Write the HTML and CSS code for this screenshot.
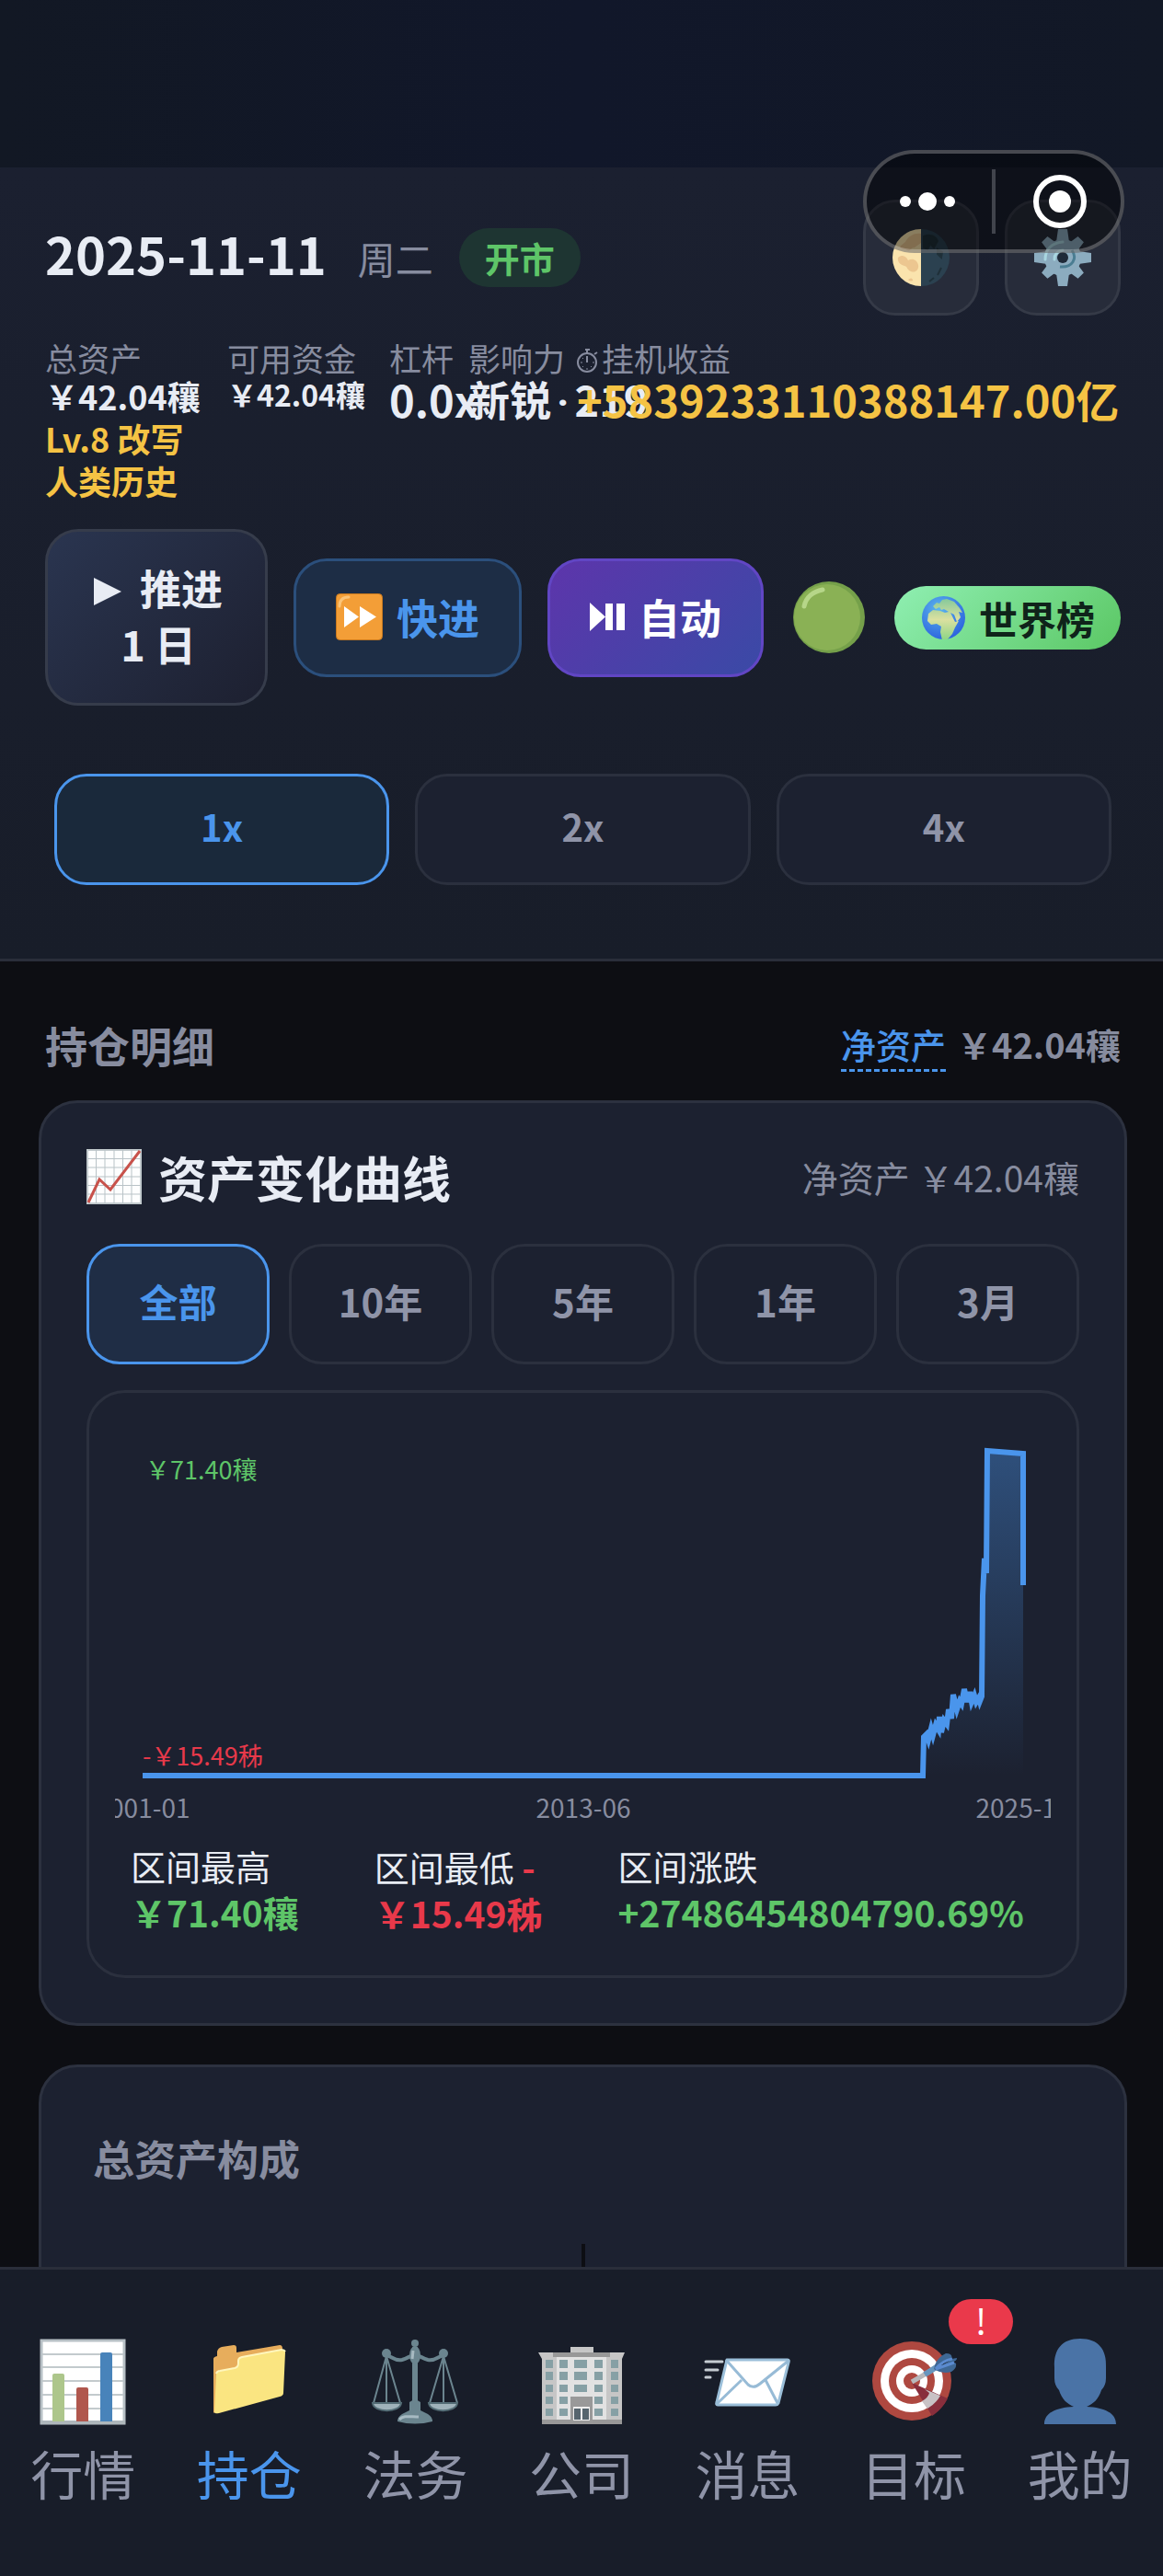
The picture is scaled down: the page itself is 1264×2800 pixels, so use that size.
FILE: index.html
```html
<!DOCTYPE html>
<html lang="zh-CN">
<head>
  <meta charset="UTF-8">
  <meta name="viewport" content="width=device-width, initial-scale=1.0">
  <title>持仓</title>
  <link rel="stylesheet" href="styles.css">
</head>
<body>
  <div class="app">
    <div class="status-bar"></div>

    <div class="capsule">
      <button class="capsule__btn" aria-label="更多">
        <svg width="60" height="24" viewBox="0 0 60 24" fill="#fff"><circle cx="6" cy="12" r="6"/><circle cx="30" cy="12" r="10"/><circle cx="54" cy="12" r="6"/></svg>
      </button>
      <span class="capsule__line"></span>
      <button class="capsule__btn" aria-label="关闭">
        <svg width="58" height="58" viewBox="0 0 58 58"><circle cx="29" cy="29" r="26" fill="none" stroke="#fff" stroke-width="6"/><circle cx="29" cy="29" r="12" fill="#fff"/></svg>
      </button>
    </div>

    <header class="header">
      <div class="date-row">
        <span class="date">2025-11-11</span>
        <span class="weekday">周二</span>
        <span class="market">开市</span>
        <div class="tools">
          <button class="tool" aria-label="主题">
            <svg width="62" height="62" viewBox="0 0 62 62">
              <circle cx="31" cy="31" r="31" fill="#2b4150"/>
              <path d="M31 0a31 31 0 0 0 0 62z" fill="#fae3ad"/>
              <path d="M31 5c-8-1-14 3-17 9l-6 5c2 4 5 2 8 4s4-3 8-3l7-5zM6 31c5-4 9-1 11 3 5-3 10 0 11 5s-3 9-8 7-3-5-7-6-8-4-7-9zM17 55c2-2 4-2 5 0s-3 2-5 0z" fill="#ecc690"/>
              <path d="M34 8c7-3 13 0 15 5l-4 7-4-4-3 6-4-2zM49 22l5 3-1 6-4-4zM53 42l-4 8M45 53l-5 4" fill="#1f3039" stroke="#1f3039" stroke-width="2"/>
            </svg>
          </button>
          <button class="tool" aria-label="设置">
            <svg width="62" height="62" viewBox="0 0 62 62">
              <g fill="#8cacbf">
                <circle cx="31" cy="31" r="20"/>
                <path d="M26 0h10l2 14H24zM26 62h10l2-14H24zM0 26v10l14 2V24zM62 26v10l-14 2V24z"/>
                <path d="M26 0h10l2 14H24zM26 62h10l2-14H24zM0 26v10l14 2V24zM62 26v10l-14 2V24z" transform="rotate(45 31 31) translate(3 3) scale(.9)"/>
              </g>
              <path d="M12 33c0-11 7-18 19-19M22 33c0-6 3-9 9-10" fill="none" stroke="#a9d6e0" stroke-width="3" stroke-linecap="round"/>
              <path d="M41 23c6 9 1 19-13 18" fill="none" stroke="#4a7d92" stroke-width="3"/>
              <circle cx="31" cy="31" r="6" fill="#1f2a38"/>
            </svg>
          </button>
        </div>
      </div>

      <div class="stats">
        <div class="stat">
          <div class="stat__label">总资产</div>
          <div class="stat__value stat__value--md">&#65509;42.04穰</div>
          <div class="level">Lv.8 改写<br>人类历史</div>
        </div>
        <div class="stat">
          <div class="stat__label">可用资金</div>
          <div class="stat__value stat__value--sm">&#65509;42.04穰</div>
        </div>
        <div class="stat">
          <div class="stat__label">杠杆</div>
          <div class="stat__value">0.0x</div>
        </div>
        <div class="stat">
          <div class="stat__label">影响力</div>
          <div class="stat__value stat__value--rank">新锐<span class="sep">·</span>219</div>
        </div>
        <div class="stat">
          <div class="stat__label">
            <svg class="stopwatch" width="24" height="28" viewBox="0 0 24 28" fill="none" stroke="#878c9f" stroke-width="2"><circle cx="11" cy="16" r="10"/><path d="M9 2h5M11 3v3M11 9v7M19 7l3-2"/><path d="M11 22v2M4 16h2M17 16h2M6 11l1 1M6 21l1-1M16 21l-1-1" stroke-width="1"/></svg>挂机收益
          </div>
          <div class="stat__value stat__value--gold">+5839233110388147.00亿</div>
        </div>
      </div>

      <div class="controls">
        <button class="btn btn--step"><svg width="30" height="30" viewBox="0 0 30 30"><path d="M0 0l30 15L0 30z" fill="#e8ecf4"/></svg><span class="btn__gap"></span>推进<br>1 日</button>
        <button class="btn btn--fast">
          <svg width="51" height="51" viewBox="0 0 51 51"><rect x=".5" y=".5" width="50" height="50" rx="4" fill="#f39e37" stroke="#c8791e"/><path d="M4 14C4 7 8 4 14 4" fill="none" stroke="#fbc477" stroke-width="3" stroke-linecap="round"/><path d="M9 14l16 11.500L9 37zM26 14l18 11.500L26 37z" fill="#fff"/></svg>
          快进
        </button>
        <button class="btn btn--auto">
          <svg width="38" height="31" viewBox="0 0 38 31" fill="#fff"><path d="M0 0l17 15.500L0 31zM17 1h8v29h-8zM29 1h9v29h-9z"/></svg>
          自动
        </button>
        <svg class="dot" width="78" height="78" viewBox="0 0 78 78"><circle cx="39" cy="39" r="39" fill="#75a04a"/><circle cx="37" cy="39" r="36" fill="#8ab155"/><path d="M12 27C14 17 22 11 32 9" fill="none" stroke="#b6d689" stroke-width="5" stroke-linecap="round"/></svg>
        <a class="rank" href="#rank">
          <svg width="47" height="47" viewBox="0 0 47 47"><defs><radialGradient id="sea" cx=".4" cy=".3" r=".75"><stop offset="0" stop-color="#5cb6ee"/><stop offset="1" stop-color="#2a60dd"/></radialGradient><linearGradient id="land" x1="0" y1="0" x2="0" y2="1"><stop offset="0" stop-color="#86c99b"/><stop offset=".5" stop-color="#dbe0a0"/><stop offset="1" stop-color="#8bd585"/></linearGradient></defs><circle cx="23.500" cy="23.500" r="23.500" fill="url(#sea)"/><path d="M12 11l4-4 3 1 3-4 5-1 8 3 6 7 3 5-4-1 2 6-4 5-3-8-4-2 5 10 4-1-4 7-3 7-6 7h-5l-2-9 1-6-5-3-6 1-4-4 1-8 5-4 8 1 5 2 4-1-5-3-3 1-2-3-4 2zM33 34l2-1-1 6-2 1z" fill="url(#land)"/></svg>
          世界榜
        </a>
      </div>

      <div class="speeds">
        <button class="speed speed--active">1x</button>
        <button class="speed">2x</button>
        <button class="speed">4x</button>
      </div>
    </header>

    <main class="main">
      <div class="section-head">
        <h2 class="section-title">持仓明细</h2>
        <div class="networth"><a class="networth__link" href="#networth">净资产</a><span class="networth__value">&#65509;42.04穰</span></div>
      </div>

      <section class="card">
        <div class="card-head">
          <svg width="60" height="60" viewBox="0 0 60 60"><rect x="1" y="1" width="58" height="58" fill="#fdfefe" stroke="#c3cbce" stroke-width="2"/><path d="M10.500 1v58M20 1v58M30 1v58M39.500 1v58M49 1v58M1 10.500h58M1 20h58M1 30h58M1 39.500h58M1 49h58" stroke="#b9c3c7" stroke-width="1"/><path d="M2 58l12-25 12 11L58 2" fill="none" stroke="#c8524b" stroke-width="3"/></svg>
          <h3 class="card-title">资产变化曲线</h3>
          <span class="card-note">净资产 &#65509;42.04穰</span>
        </div>

        <div class="ranges">
          <button class="range range--active">全部</button>
          <button class="range">10年</button>
          <button class="range">5年</button>
          <button class="range">1年</button>
          <button class="range">3月</button>
        </div>

        <div class="chart-box">
          <svg class="chart" viewBox="0 0 1017 455">
            <defs>
              <linearGradient id="area" x1="0" y1="0" x2="0" y2="1">
                <stop offset="0" stop-color="#4a95ec" stop-opacity=".4"/>
                <stop offset="1" stop-color="#4a95ec" stop-opacity="0"/>
              </linearGradient>
            </defs>
            <path d="M30 388H878L879 346 896 332 911 310 923 304 942 303 943 192 948 36 987 39V388z" fill="url(#area)"/>
            <polyline points="30,388 878,388 879,346 882,343 884,349 887,337 889,344 892,333 895,338 896,324 898,341 901,328 904,332 906,316 909,326 911,300 914,312 915,316 918,307 920,310 923,294 926,308 929,297 931,308 934,301 936,308 939,303 940,307 942,302 943,192 945,152 947,168 948,35 987,38 987,181" fill="none" stroke="#4a95ec" stroke-width="6"/>
            <text x="33" y="66" class="chart__max">&#65509;71.40穰</text>
            <text x="30" y="377" class="chart__min">-&#65509;15.49秭</text>
            <text x="30" y="434" class="chart__date">2001-01</text>
            <text x="509" y="434" class="chart__date">2013-06</text>
            <text x="987" y="434" class="chart__date">2025-11</text>
          </svg>
          <div class="summary">
            <div>区间最高<br><span class="summary__value up">&#65509;71.40穰</span></div>
            <div>区间最低 <span class="summary__value down">-<br>&#65509;15.49秭</span></div>
            <div>区间涨跌<br><span class="summary__value up">+27486454804790.69%</span></div>
          </div>
        </div>
      </section>

      <section class="card card--mix">
        <h3 class="mix-title">总资产构成</h3>
        <svg class="pie" width="520" height="520" viewBox="0 0 520 520"><path d="M260 0v260" stroke="#0d0e13" stroke-width="4"/></svg>
      </section>
    </main>

    <nav class="tabbar">
      <a class="tab" href="#market">
        <svg width="96" height="96" viewBox="0 0 96 96"><rect x="3" y="3" width="90" height="90" fill="#fff" stroke="#b7c0c5" stroke-width="3"/><path d="M4 18h88M4 32h88M4 47h88M4 62h88M4 77h88" stroke="#c3cacd" stroke-width="2"/><path d="M2 92h92" stroke="#aeb7bb" stroke-width="4"/><path d="M15 91V41q0-2 2-2h9q2 0 2 2v50z" fill="#adc68b"/><path d="M41 91V56q0-2 2-2h9q2 0 2 2v35z" fill="#b0574d"/><path d="M67 91V18q0-2 2-2h9q2 0 2 2v73z" fill="#4883ba"/></svg>
        <span>行情</span>
      </a>
      <a class="tab tab--active" href="#holdings">
        <svg width="96" height="96" viewBox="0 0 96 96"><path d="M9 82V23q0-2 4-3v-5q1-4 5-5l13-2q3 0 3 3v5l47-8q3 0 3 4z" fill="#e7ad5c"/><path d="M10 81l2-41q0-4 4-4l16-3q4-1 4-5v-3q0-3 4-4l43-8q4 0 4 3l-2 44q0 3-4 4l-66 18q-5 1-5-1z" fill="#fae581"/><path d="M12 39q1-3 4-3l16-3q4-1 4-5v-3q0-3 4-4l43-8q3 0 4 2" fill="none" stroke="#fff6bd" stroke-width="2"/></svg>
        <span>持仓</span>
      </a>
      <a class="tab" href="#law">
        <svg width="96" height="96" viewBox="0 0 96 96" fill="none" stroke="#6b858f"><path d="M17 20L3 71M17 20v54M17 20l15 51M79 20L64 71M79 20v54M79 20l15 51" stroke-width="2"/><path d="M15 19c8 0 10 7 19 5 7-2 9-5 14-5s7 3 14 5c9 2 11-5 19-5" stroke-width="4"/><path d="M48 10v65" stroke-width="6"/><g fill="#6b858f" stroke="none"><circle cx="48" cy="6" r="4"/><circle cx="17" cy="17" r="5"/><circle cx="79" cy="17" r="5"/><ellipse cx="48" cy="19" rx="6" ry="10"/><path d="M42 70q6-5 12 0v9l8 4q5 3 5 8-19 5-38 0 0-5 5-8l8-4z"/></g><path d="M31 89c4-5 12-3 21-3" stroke="#a7bac2" stroke-width="3"/><path d="M46 14l-1 9" stroke="#a7bac2" stroke-width="3"/><path d="M2 71h31c-1 11-30 11-31 0zM63 71h31c-1 11-30 11-31 0z" fill="#9fb2ba" stroke="#536c75" stroke-width="2"/></svg>
        <span>法务</span>
      </a>
      <a class="tab" href="#company">
        <svg width="96" height="96" viewBox="0 0 96 96"><path d="M36 10h25v8H36z" fill="#c6c6c6"/><path d="M1 16h94l-3 7v71H5V23z" fill="#c6c6c6"/><path d="M21 21h54v73H21z" fill="#e2e2e2"/><path d="M17 16h62v5H17zM5 89h87v5H5z" fill="#989898"/><path d="M36 64h24v30H36z" fill="#999"/><path d="M39 75h18v15H39z" fill="#eee"/><path d="M40 77h7v12h-7zM49 77h7v12h-7z" fill="#56656e"/><path d="M9 24h8v9H9zM9 37h8v9H9zM9 51h8v8H9zM9 64h8v8H9zM9 77h8v8H9zM24 24h9v9h-9zM24 37h9v9h-9zM24 51h9v8h-9zM24 64h9v8h-9zM24 77h9v8h-9zM40 24h14v9H40zM40 37h14v9H40zM40 51h14v8H40zM62 24h9v9h-9zM62 37h9v9h-9zM62 51h9v8h-9zM62 64h9v8h-9zM62 77h9v8h-9zM80 24h8v9h-8zM80 37h8v9h-8zM80 51h8v8h-8zM80 64h8v8h-8zM80 77h8v8h-8z" fill="#86a0a5"/></svg>
        <span>公司</span>
      </a>
      <a class="tab" href="#message">
        <svg width="96" height="96" viewBox="0 0 96 96"><path d="M2 26h18M2 35h13M2 43h5" stroke="#c5ccd2" stroke-width="3" stroke-linecap="round"/><path d="M25 24h66q2 0 1 3l-11 44q-1 2-3 2H15q-2 0-1-3z" fill="#fff" stroke="#9bbfd9" stroke-width="3" stroke-linejoin="round"/><path d="M14 72l27-26M80 71L67 46M24 24l24 27q6 5 13-1l31-25" fill="none" stroke="#97bbd6" stroke-width="3"/></svg>
        <span>消息</span>
      </a>
      <a class="tab" href="#goal">
        <svg width="96" height="96" viewBox="0 0 96 96"><circle cx="46" cy="47" r="43" fill="#ae4840"/><circle cx="46" cy="47" r="34" fill="#fff"/><circle cx="46" cy="47" r="25" fill="#ae4840"/><circle cx="46" cy="47" r="17" fill="#fff"/><circle cx="46" cy="47" r="9" fill="#ae4840"/><path d="M46 49l39 17q-6 12-17 19z" fill="#882e3c"/><path d="M60 56l17 7q-5 9-14 14l-6-8q7-4 8-9z" fill="#c8c2c5"/><path d="M46 48l24-14" stroke="#b8b8bb" stroke-width="5"/><path d="M60 40l14-9" stroke="#6795bd" stroke-width="6"/><path d="M70 34q2-12 13-17 8 0 6 6l6-1q0 3-4 4l3 2q1 5-5 9-10 3-19-3z" fill="#3f6895"/><path d="M72 34q7-9 18-11M72 34l20-7" stroke="#5b8bd0" stroke-width="3"/></svg>
        <span>目标</span>
        <span class="badge">!</span>
      </a>
      <a class="tab" href="#mine">
        <svg width="96" height="96" viewBox="0 0 96 96"><path d="M48 1c20 0 29 12 28 31v12q0 8-5 13c-3 10-9 15-16 18 20 1 32 7 32 19H9c0-12 12-18 32-19-7-3-13-8-16-18q-5-5-5-13V32C19 13 28 1 48 1z" fill="#4a73a6"/></svg>
        <span>我的</span>
      </a>
    </nav>
  </div>
</body>
</html>
```
FILE: styles.css
```css
* {
  box-sizing: border-box;
}

body {
  margin: 0;
  background: #0d0e13;
  color: #e8ecf4;
  font-family: "Noto Sans CJK SC", sans-serif;
}

button {
  font-family: inherit;
  color: inherit;
  margin: 0;
  padding: 0;
  border: none;
  background: none;
  cursor: pointer;
}

a {
  color: inherit;
  text-decoration: none;
}

h2, h3 {
  margin: 0;
}

svg {
  flex-shrink: 0;
}

.app {
  position: relative;
  display: flex;
  flex-direction: column;
  height: 100vh;
  overflow: hidden;
}

.status-bar {
  flex: 0 0 182px;
  background: linear-gradient(90deg, #121824, #11172a 50%, #121826);
}

/* system capsule floats over the header */
.capsule {
  position: absolute;
  z-index: 2;
  top: 163px;
  right: 42px;
  width: 284px;
  height: 112px;
  display: flex;
  align-items: center;
  border: 4px solid rgba(255, 255, 255, 0.25);
  border-radius: 56px;
  background: rgba(0, 0, 0, 0.45);
}

.capsule__btn {
  flex: 1;
  display: flex;
  justify-content: center;
  align-items: center;
}

.capsule__line {
  width: 4px;
  height: 70px;
  margin: 0 4px;
  background: #41444c;
}

/* header */
.header {
  flex: none;
  padding: 35px 46px 80px 49px;
  background: linear-gradient(180deg, #1b2030, #181d29);
  border-bottom: 3px solid #2a2e3a;
}

.date-row {
  display: flex;
  align-items: center;
}

.date {
  font-size: 56px;
  line-height: 64px;
  font-weight: 700;
  padding-bottom: 10px;
}

.weekday {
  margin-left: 34px;
  font-size: 41px;
  line-height: 64px;
  color: #878c9f;
}

.market {
  margin-left: 28px;
  padding: 0 28px;
  border-radius: 32px;
  background: #1e3532;
  color: #5ec568;
  font-size: 38px;
  line-height: 64px;
  font-weight: 700;
}

.tools {
  margin-left: auto;
  display: flex;
  gap: 28px;
}

.tool {
  width: 126px;
  height: 126px;
  display: flex;
  justify-content: center;
  align-items: center;
  border: 3px solid #353a47;
  border-radius: 35px;
  background: #272c3a;
}

.stats {
  display: grid;
  grid-template-columns: 198px 176px 86px 118px 1fr;
  margin-top: 25px;
  white-space: nowrap;
}

.stat {
  min-width: 0;
}

.stat__label {
  font-size: 35px;
  line-height: 42px;
  color: #878c9f;
}

.stopwatch {
  margin-right: 3px;
  vertical-align: -2px;
}

.stat__value {
  font-size: 47px;
  line-height: 48px;
  font-weight: 700;
}

.stat__value--md {
  font-size: 36px;
  line-height: 40px;
}

.stat__value--sm {
  font-size: 32px;
  line-height: 36px;
}

.stat__value--rank {
  font-size: 45px;
}

.stat__value--gold {
  color: #f5c344;
}

.sep {
  padding: 0 6px;
  font-family: Roboto, sans-serif;
}

.level {
  margin-top: 3px;
  font-size: 36px;
  line-height: 46px;
  font-weight: 700;
  color: #f5c344;
}

.controls {
  display: flex;
  justify-content: space-between;
  align-items: center;
  margin-top: 30px;
}

.btn {
  border: 3px solid;
  border-radius: 36px;
  font-size: 45px;
  font-weight: 700;
  line-height: 61px;
  white-space: nowrap;
}

.btn--step {
  padding: 30px 46px 34px 50px;
  background: linear-gradient(135deg, #2a3550, #1d2030);
  border-color: #363c4b;
}

.btn__gap {
  display: inline-block;
  width: 20px;
}

.btn--fast,
.btn--auto {
  display: flex;
  align-items: center;
  gap: 15px;
  padding: 30px 43px 32px;
}

.btn--fast {
  background: #1d2d45;
  border-color: #2b4f7c;
  color: #4a95ec;
}

.btn--auto {
  background: linear-gradient(135deg, #5d35ab, #3a4aa6);
  border-color: #6146c4;
  color: #fff;
}

.dot {
  margin: 0 4px;
}

.rank {
  display: flex;
  align-items: center;
  gap: 15px;
  padding: 0 28px 0 30px;
  height: 69px;
  border-radius: 35px;
  background: linear-gradient(135deg, #8fefb2, #5bc764);
  color: #0f231a;
  font-size: 42px;
  font-weight: 700;
}

.speeds {
  display: grid;
  grid-template-columns: repeat(3, 1fr);
  gap: 28px;
  margin: 74px 10px 0;
}

.speed {
  height: 121px;
  padding-bottom: 8px;
  border: 3px solid #2b303e;
  border-radius: 35px;
  background: #1c2130;
  color: #8f94a8;
  font-size: 40px;
  font-weight: 700;
}

.speed--active {
  background: #1a293b;
  border-color: #4a95ec;
  color: #4a95ec;
}

/* holdings */
.main {
  flex: 1;
  min-height: 0;
  overflow: hidden;
  padding: 0 39px 0 42px;
}

.section-head {
  display: flex;
  justify-content: space-between;
  align-items: flex-start;
  padding: 63px 7px 31px;
}

.section-title {
  font-size: 46px;
  line-height: 54px;
  color: #878c9f;
}

.networth {
  font-size: 38px;
  line-height: 54px;
  color: #878c9f;
}

.networth__link {
  display: inline-block;
  margin-right: 12px;
  border-bottom: 3px dashed #4a95ec;
  color: #4a95ec;
  font-weight: 500;
}

.networth__value {
  font-weight: 700;
}

.card {
  padding: 47px 49px 49px;
  border: 3px solid #2c313f;
  border-radius: 42px;
  background: #1c2130;
}

.card-head {
  display: flex;
  align-items: center;
}

.card-title {
  margin-left: 18px;
  font-size: 53px;
  line-height: 66px;
}

.card-note {
  margin-left: auto;
  font-size: 39px;
  color: #878c9f;
}

.ranges {
  display: grid;
  grid-template-columns: repeat(5, 1fr);
  gap: 21px;
  margin-top: 40px;
}

.range {
  height: 131px;
  padding-bottom: 8px;
  border: 3px solid #2b303e;
  border-radius: 36px;
  color: #8f94a8;
  font-size: 42px;
  font-weight: 700;
}

.range--active {
  background: #1f2d45;
  border-color: #4a95ec;
  color: #4a95ec;
}

.chart-box {
  margin-top: 28px;
  padding: 28px 28px 42px;
  border: 3px solid #2b303e;
  border-radius: 42px;
}

.chart {
  display: block;
  width: 100%;
  overflow: hidden;
}

.chart text {
  font-size: 27px;
}

.chart__max {
  fill: #5ec568;
}

.chart__min {
  fill: #e8394a;
}

.chart .chart__date {
  fill: #878c9f;
  font-size: 28px;
  text-anchor: middle;
}

.summary {
  display: flex;
  gap: 82px;
  margin-top: 6px;
  padding: 0 17px;
  font-size: 38px;
  line-height: 50px;
  white-space: nowrap;
}

.summary__value {
  font-size: 39px;
  font-weight: 700;
}

.up {
  color: #5ec568;
}

.down {
  color: #e8394a;
}

.card--mix {
  margin-top: 42px;
  padding: 69px 56px;
}

.mix-title {
  font-size: 45px;
  line-height: 60px;
  color: #878c9f;
}

.pie {
  display: block;
  margin: 63px auto 0;
}

/* bottom navigation */
.tabbar {
  flex: 0 0 336px;
  display: grid;
  grid-template-columns: repeat(7, 1fr);
  padding-top: 74px;
  border-top: 3px solid #2a2e3a;
  background: #181d29;
}

.tab {
  position: relative;
  display: flex;
  flex-direction: column;
  align-items: center;
  gap: 10px;
  color: #8f94a8;
  font-size: 57px;
  line-height: 80px;
}

.tab--active {
  color: #4a95ec;
}

.badge {
  position: absolute;
  top: -42px;
  left: 71%;
  width: 70px;
  height: 49px;
  border-radius: 25px;
  background: #ea394b;
  color: #fff;
  font-size: 38px;
  line-height: 46px;
  text-align: center;
}
```
